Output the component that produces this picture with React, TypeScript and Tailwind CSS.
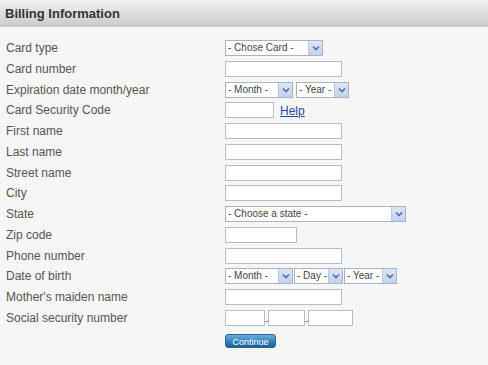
import React from 'react';

const font = { fontFamily: '"Liberation Sans", Arial, sans-serif' };

const Select = ({ label, w }: { label: string; w: string }) => (
  <div className={`flex items-stretch h-[16px] border border-[#a9b3c2] bg-white ${w}`}>
    <span className="flex-1 pl-[2px] text-[10px] leading-[14px] text-[#444] whitespace-nowrap overflow-hidden">{label}</span>
    <span className="w-[14px] flex items-center justify-center bg-gradient-to-b from-[#dbe6f5] to-[#c3d3ec] border-l border-[#b8c7de]">
      <svg width="8" height="6" viewBox="0 0 8 6">
        <path d="M1 1.5 L4 4.5 L7 1.5" fill="none" stroke="#4d6fa8" strokeWidth="1.6" />
      </svg>
    </span>
  </div>
);

const Input = ({ w }: { w: string }) => (
  <div className={`h-[16px] border border-[#b9bcc0] bg-white ${w}`} />
);

const rows: { label: string; field: React.ReactNode }[] = [
  { label: 'Card type', field: <Select label="- Chose Card -" w="w-[98px]" /> },
  { label: 'Card number', field: <Input w="w-[117px]" /> },
  {
    label: 'Expiration date month/year',
    field: (
      <div className="flex gap-[3px]">
        <Select label="- Month -" w="w-[68px]" />
        <Select label="- Year -" w="w-[53px]" />
      </div>
    ),
  },
  {
    label: 'Card Security Code',
    field: (
      <div className="flex items-center gap-[6px]">
        <Input w="w-[49px]" />
        <a className="text-[12px] text-[#2348a6] underline leading-none pt-[2px]">Help</a>
      </div>
    ),
  },
  { label: 'First name', field: <Input w="w-[117px]" /> },
  { label: 'Last name', field: <Input w="w-[117px]" /> },
  { label: 'Street name', field: <Input w="w-[117px]" /> },
  { label: 'City', field: <Input w="w-[117px]" /> },
  { label: 'State', field: <Select label="- Choose a state -" w="w-[181px]" /> },
  { label: 'Zip code', field: <Input w="w-[72px]" /> },
  { label: 'Phone number', field: <Input w="w-[117px]" /> },
  {
    label: 'Date of birth',
    field: (
      <div className="flex gap-[1px]">
        <Select label="- Month -" w="w-[68px]" />
        <Select label="- Day -" w="w-[49px]" />
        <Select label="- Year -" w="w-[53px]" />
      </div>
    ),
  },
  { label: "Mother's maiden name", field: <Input w="w-[117px]" /> },
  {
    label: 'Social security number',
    field: (
      <div className="flex items-end">
        <Input w="w-[40px]" />
        <span className="w-[3px] h-px bg-[#888] mb-[4px]" />
        <Input w="w-[37px]" />
        <span className="w-[3px] h-px bg-[#888] mb-[4px]" />
        <Input w="w-[45px]" />
      </div>
    ),
  },
];

export default function App() {
  return (
    <div className="w-[488px] h-[365px] bg-[#f6f6f6] overflow-hidden" style={font}>
      <div className="h-[27px] bg-gradient-to-b from-[#f2f2f2] via-[#dedede] to-[#c9c9c9] flex items-center pl-[5px]">
        <h1 className="text-[13px] font-bold text-[#333]">Billing Information</h1>
      </div>
      <div className="pt-[13px] flex flex-col gap-[4.77px]">
        {rows.map((r) => (
          <div key={r.label} className="flex items-center h-[16px]">
            <span className="w-[225px] pl-[6px] text-[12px] text-[#555] whitespace-nowrap">{r.label}</span>
            {r.field}
          </div>
        ))}
        <div className="flex pl-[225px] pt-[3px]">
          <button className="w-[51px] h-[14px] rounded-[3px] bg-gradient-to-b from-[#6aaedb] via-[#3a85bf] to-[#1f5f93] text-white text-[9px] leading-[14px] border border-[#2a6496]">
            Continue
          </button>
        </div>
      </div>
    </div>
  );
}
